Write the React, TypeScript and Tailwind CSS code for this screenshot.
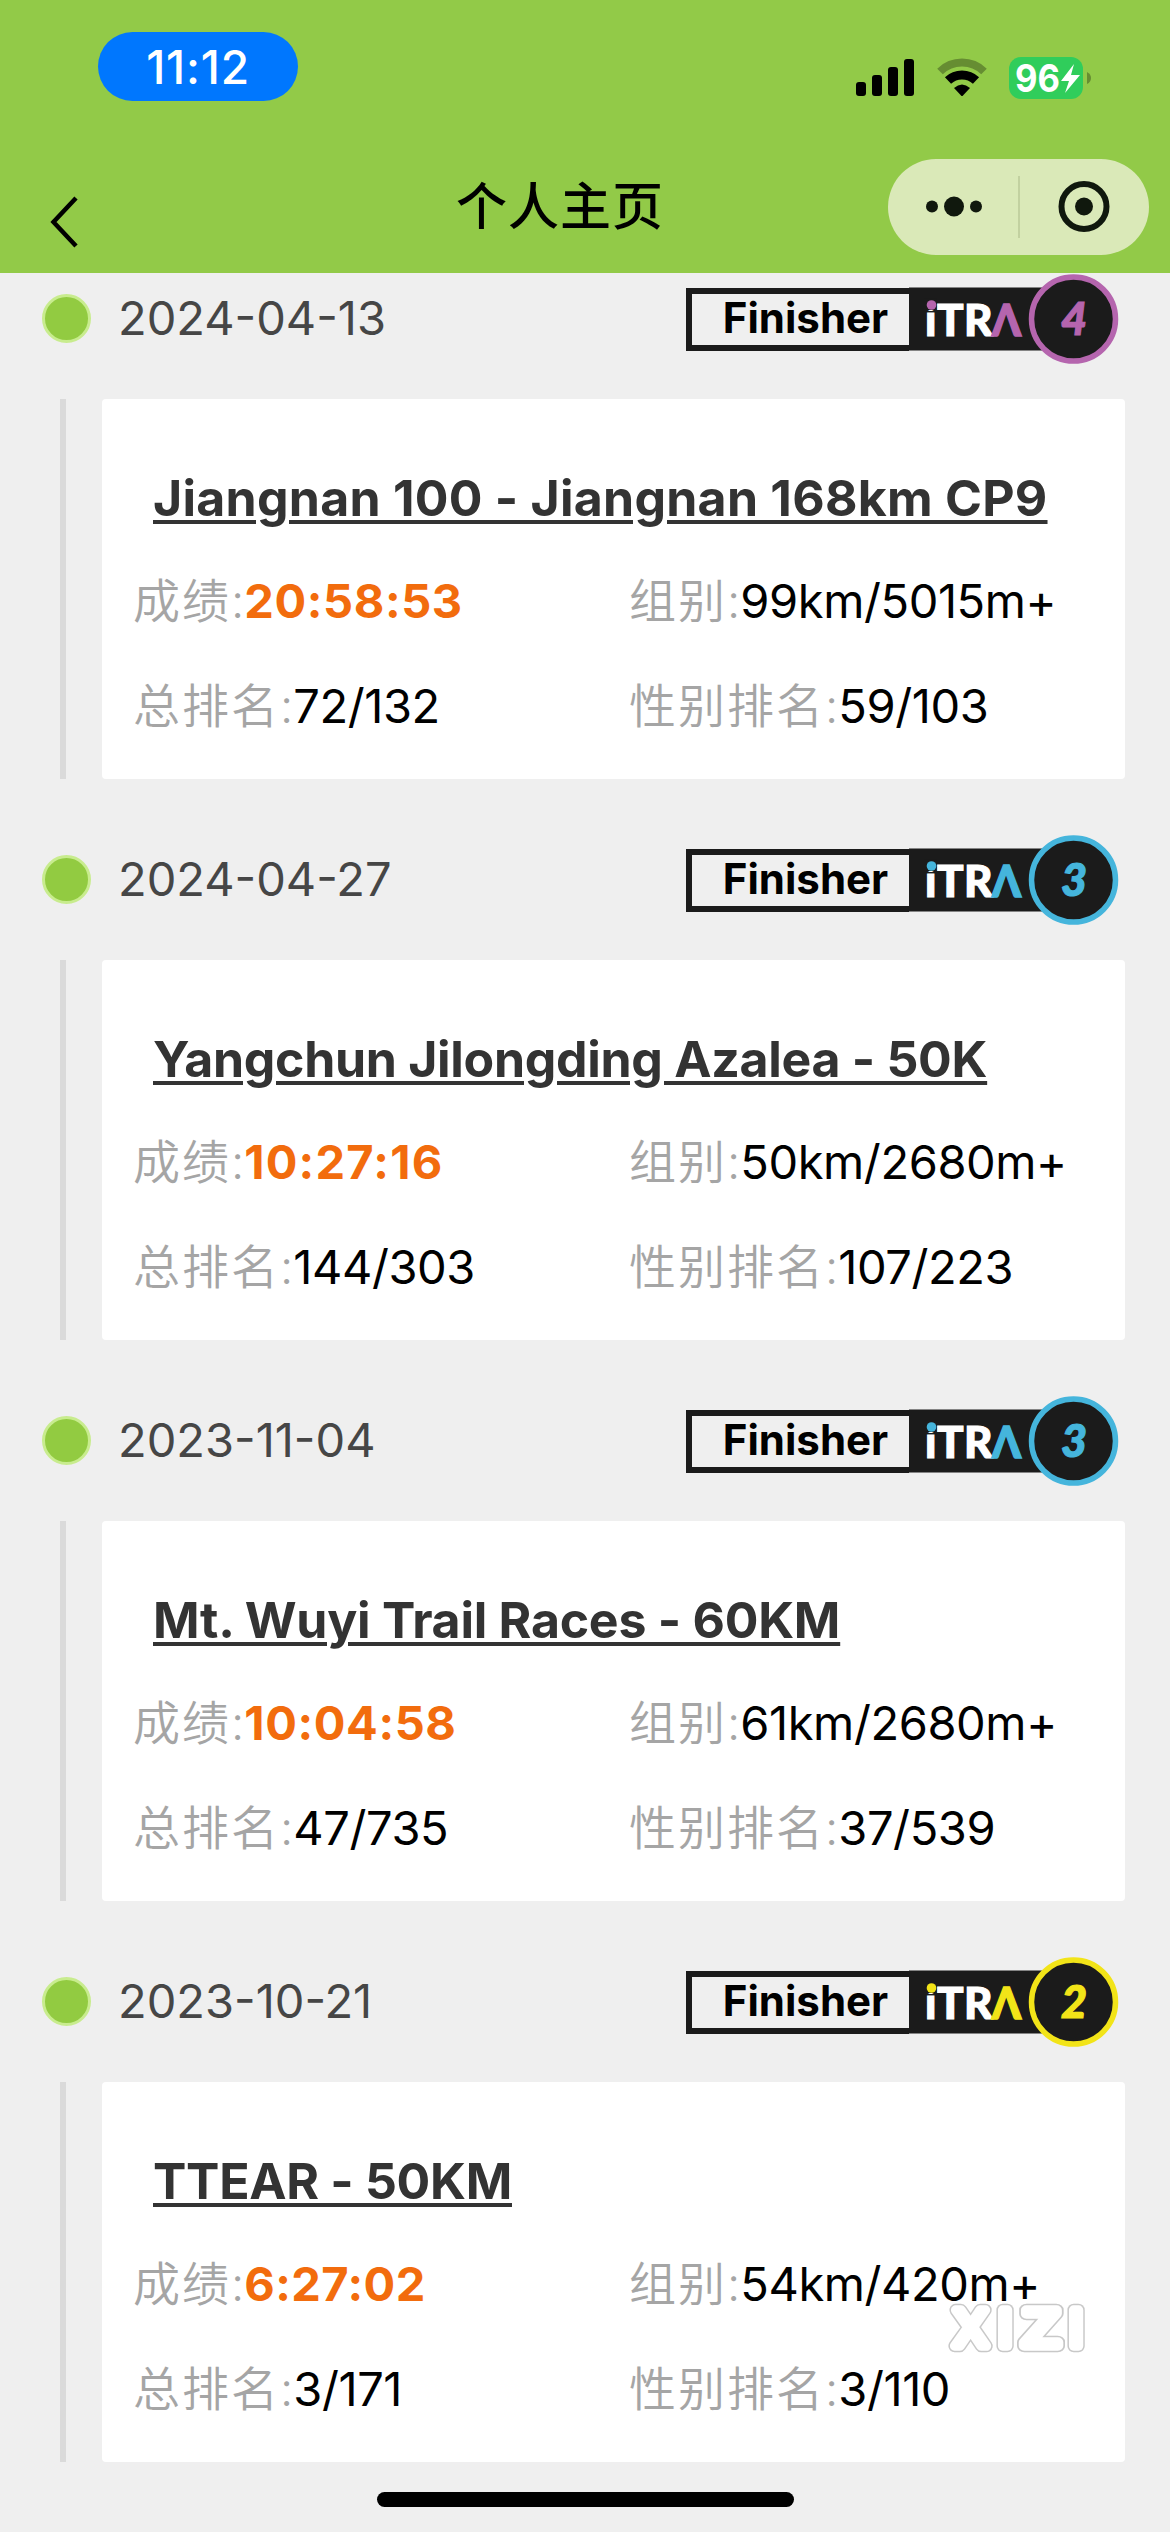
import { clsx } from "clsx";

interface Race {
  date: string;
  level: number;
  color: string;
  name: string;
  nameSpacing: string;
  time: string;
  timeSpacing: string;
  category: string;
  rank: string;
  genderRank: string;
}

const races: Race[] = [
  {
    date: "2024-04-13",
    level: 4,
    color: "#b565ae",
    name: "Jiangnan 100 - Jiangnan 168km CP9",
    nameSpacing: "tracking-[0.250px]",
    time: "20:58:53",
    timeSpacing: "tracking-[0.600px]",
    category: "99km/5015m+",
    rank: "72/132",
    genderRank: "59/103",
  },
  {
    date: "2024-04-27",
    level: 3,
    color: "#45b5dc",
    name: "Yangchun Jilongding Azalea - 50K",
    nameSpacing: "tracking-[-0.300px]",
    time: "10:27:16",
    timeSpacing: "tracking-[1.200px]",
    category: "50km/2680m+",
    rank: "144/303",
    genderRank: "107/223",
  },
  {
    date: "2023-11-04",
    level: 3,
    color: "#45b5dc",
    name: "Mt. Wuyi Trail Races - 60KM",
    nameSpacing: "tracking-[-0.250px]",
    time: "10:04:58",
    timeSpacing: "tracking-[0.600px]",
    category: "61km/2680m+",
    rank: "47/735",
    genderRank: "37/539",
  },
  {
    date: "2023-10-21",
    level: 2,
    color: "#f2e418",
    name: "TTEAR - 50KM",
    nameSpacing: "tracking-[-0.300px]",
    time: "6:27:02",
    timeSpacing: "tracking-[0.400px]",
    category: "54km/420m+",
    rank: "3/171",
    genderRank: "3/110",
  },
];

function StatusBar() {
  return (
    <div className="flex h-[101px] items-end justify-between pl-[98px] pr-[78px]">
      <div className="flex h-[69px] w-[200px] items-center justify-center rounded-full bg-[#0077fe] text-[46px] font-medium leading-none tracking-[0.800px] text-white">
        11:12
      </div>
      <svg width="236" height="44" viewBox="856 56 236 44" className="mb-[1px]">
        {/* signal */}
        <rect x="856" y="82" width="10" height="14" rx="3" />
        <rect x="872" y="75" width="10" height="21" rx="3" />
        <rect x="888" y="67" width="10" height="29" rx="3" />
        <rect x="904" y="59" width="10" height="37" rx="3" />
        {/* wifi */}
        <g fill="none" stroke="#000">
          <path d="M940 71.500a31.500 31.500 0 0 1 44 0" strokeWidth="8" opacity="0.3" />
          <path d="M948 80.500a20.500 20.500 0 0 1 28 0" strokeWidth="9" />
        </g>
        <path d="M954 88Q962 81 970 88L963 95.500Q962 96.500 961 95.500Z" />
        {/* battery */}
        <rect x="1009" y="57" width="74" height="42" rx="12" fill="#30cd5b" />
        <path d="M1087 72q4 2 4 6t-4 6z" opacity="0.3" />
        <text
          x="1015"
          y="91.500"
          fontSize="38"
          fontWeight="700"
          fill="#fff"
          textLength="45"
          lengthAdjust="spacingAndGlyphs"
        >
          96
        </text>
        <path d="M1074 64l-13 17h8l-4 12 15-18h-9z" fill="#fff" />
      </svg>
    </div>
  );
}

function NavBar() {
  return (
    <div className="flex h-[172px] items-start justify-between pl-[50px] pr-[21px] pt-[58px]">
      <svg width="30" height="54" viewBox="0 0 30 54" fill="none" className="mt-[36px]">
        <path d="M26 3L3.500 27L26 51" stroke="#000" strokeWidth="4.500" />
      </svg>
      <h1 className="ml-[152px] mt-[19px] text-[51px] font-medium leading-[58px] tracking-[1px]">个人主页</h1>
      <div className="flex h-[96px] w-[261px] items-center rounded-full bg-[#dae9b8]">
        <svg width="261" height="96" viewBox="888 159 261 96" fill="#10180d">
          <circle cx="932" cy="206.500" r="6" />
          <circle cx="954" cy="206.500" r="10" />
          <circle cx="976" cy="206.500" r="6" />
          <rect x="1018" y="176" width="2" height="62" fill="#c2d1a0" />
          <circle cx="1084" cy="206.500" r="22.500" fill="none" stroke="#10180d" strokeWidth="6" />
          <circle cx="1084" cy="206.500" r="9" />
        </svg>
      </div>
    </div>
  );
}

function FinisherBadge({ level, color }: { level: number; color: string }) {
  return (
    <div className="flex items-center">
      <div className="flex h-[63px] w-[223px] items-center justify-center border-y-6 border-l-6 border-[#1b1b1b] pb-[2px] pl-[10px] text-[42px] font-bold leading-none text-black">
        Finisher
      </div>
      <svg
        width="210"
        height="90"
        viewBox="909 273.500 210 90"
        fontFamily="Lato, sans-serif"
        fontWeight="900"
      >
        <rect x="909" y="287" width="150" height="63" fill="#1b1b1b" />
        <text x="925 937 964" y="335.500" fontSize="44" fill="#fff" stroke="#fff" strokeWidth="1.200">
          iTR
        </text>
        <rect x="924" y="298" width="12.500" height="11.500" fill="#1b1b1b" />
        <circle cx="931.500" cy="304.500" r="4.800" fill={color} />
        <text
          x="992"
          y="335.500"
          fontSize="43"
          fill={color}
          stroke={color}
          strokeWidth="1.500"
          textLength="29"
          lengthAdjust="spacingAndGlyphs"
        >
          Λ
        </text>
        <circle cx="1073.500" cy="318.500" r="42" fill="#1b1b1b" stroke={color} strokeWidth="5.500" />
        <text
          x="1074"
          y="334.500"
          fontSize="45"
          fontStyle="italic"
          textAnchor="middle"
          fill={color}
          stroke={color}
          strokeWidth="1.200"
        >
          {level}
        </text>
      </svg>
    </div>
  );
}

function Field({ label, value, valueClass }: { label: string; value: string; valueClass?: string }) {
  return (
    <div className="flex items-baseline whitespace-nowrap text-[47px] leading-[60px]">
      <span className="font-[350] tracking-[2px] text-[#a5a5a5]">{label}:</span>
      <span className={clsx("-ml-[2px]", valueClass ?? "tracking-[-0.400px] text-black")}>{value}</span>
    </div>
  );
}

function RaceItem({ race }: { race: Race }) {
  return (
    <li className="h-[561px]">
      <div className="flex h-[90px] items-center justify-between pl-[42px] pr-[51px]">
        <div className="flex items-center pb-[2px]">
          <span className="h-[49px] w-[49px] rounded-full border-3 border-[#c8ec8e] bg-[#92cb41]" />
          <time className="mb-[2px] ml-[27px] text-[47px] leading-none text-[#464646]">{race.date}</time>
        </div>
        <FinisherBadge level={race.level} color={race.color} />
      </div>
      <div className="mt-[35px] flex h-[380px] pl-[60px]">
        <div className="w-[6px] bg-[#dadada]" />
        <div className="ml-[36px] w-[1023px] rounded-[4px] bg-white">
          <h2
            className={clsx(
              "ml-[51px] mt-[68px] whitespace-nowrap text-[50px] font-bold leading-[62px] text-[#333] underline decoration-4 underline-offset-[4px]",
              race.nameSpacing
            )}
          >
            {race.name}
          </h2>
          <div className="ml-[31px] mt-[42px] grid grid-cols-[496px_1fr] gap-y-[45px]">
            <Field
              label="成绩"
              value={race.time}
              valueClass={clsx("font-bold text-[#f26c0d]", race.timeSpacing)}
            />
            <Field label="组别" value={race.category} />
            <Field label="总排名" value={race.rank} />
            <Field label="性别排名" value={race.genderRank} />
          </div>
        </div>
      </div>
    </li>
  );
}

// rounded outline lettering: a wide grey stroke with a narrower white one on top
function Watermark() {
  return (
    <svg
      className="absolute left-[944px] top-[2300px]"
      width="144"
      height="56"
      viewBox="944 2300 144 56"
      fontFamily="Liberation Sans, sans-serif"
      fontSize="51"
      strokeLinejoin="round"
    >
      <defs>
        <g id="mark">
          <text x="953.500 998" y="2345.500">
            XI
          </text>
          <text x="1022.500" y="2345.500" textLength="37" lengthAdjust="spacingAndGlyphs">
            Z
          </text>
          <text x="1069" y="2345.500">
            I
          </text>
        </g>
      </defs>
      <use href="#mark" stroke="#c8c8c8" strokeWidth="12.500" />
      <use href="#mark" fill="#fff" stroke="#fff" strokeWidth="9.500" />
    </svg>
  );
}

export default function App() {
  return (
    <div className="relative h-[2532px] w-[1170px] overflow-hidden bg-[#efefef] font-['Inter','Noto_Sans_CJK_SC',sans-serif] text-black">
      <header className="bg-[#92ca48]">
        <StatusBar />
        <NavBar />
      </header>

      <ul className="h-[2219px] pt-[1px]">
        {races.map((race) => (
          <RaceItem key={race.date} race={race} />
        ))}
      </ul>

      <div className="mx-auto h-[15px] w-[417px] rounded-full bg-black" />
      <Watermark />
    </div>
  );
}
